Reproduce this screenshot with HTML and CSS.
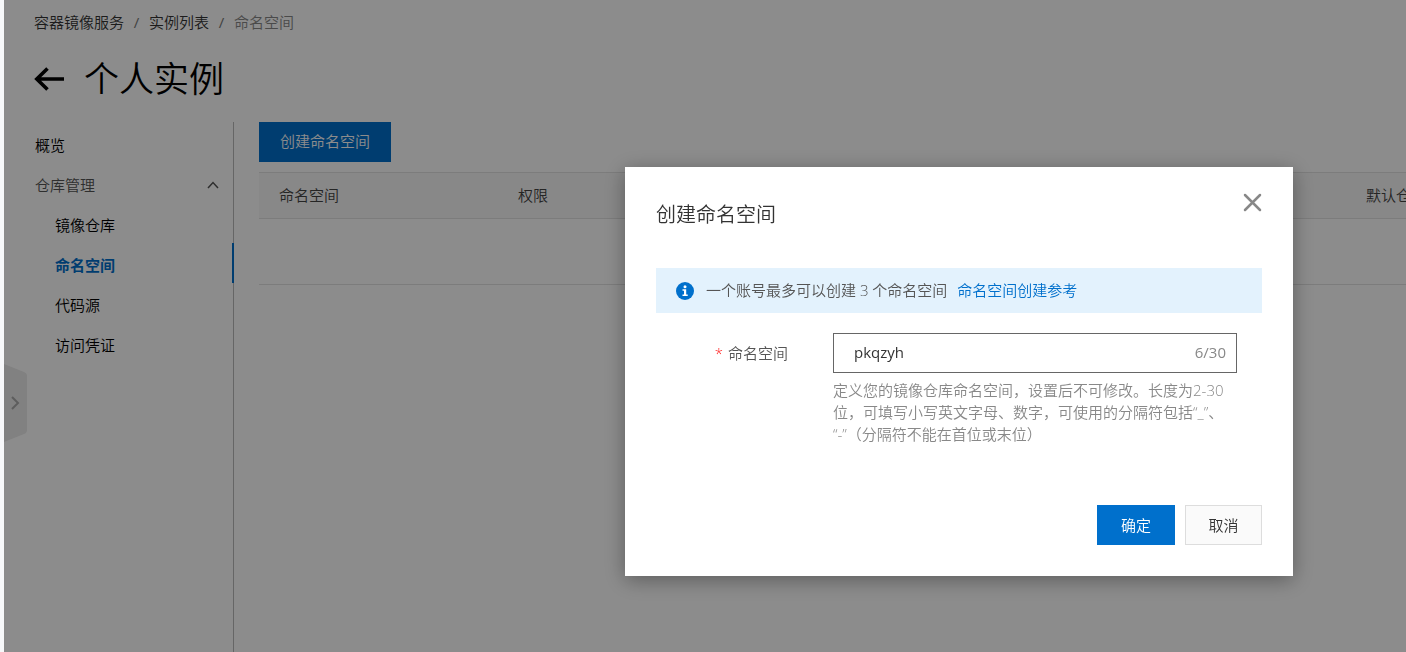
FILE: index.html
```html
<!DOCTYPE html>
<html lang="zh-CN">
<head>
<meta charset="utf-8">
<title>命名空间</title>
<link rel="stylesheet" href="styles.css">
</head>
<body>
<div class="app">
  <nav class="breadcrumb">
    <a href="#">容器镜像服务</a><span class="sep">/</span><a href="#">实例列表</a><span class="sep">/</span><span class="current">命名空间</span>
  </nav>
  <header class="page-head">
    <button class="back" aria-label="返回">
      <svg width="32" height="26" viewBox="0 0 32 26" fill="none" stroke="currentColor" stroke-width="3.600"><path d="M30 13H3M13.500 2.500L2.800 13L13.500 23.500"/></svg>
    </button>
    <h1>个人实例</h1>
  </header>
  <div class="body">
    <nav class="side">
      <a class="item top" href="#">概览</a>
      <button class="item group">仓库管理
        <svg width="12" height="8" viewBox="0 0 12 8" fill="none" stroke="currentColor" stroke-width="1.500"><path d="M1 7L6 1.500L11 7"/></svg>
      </button>
      <a class="item sub" href="#">镜像仓库</a>
      <a class="item sub active" href="#">命名空间</a>
      <a class="item sub" href="#">代码源</a>
      <a class="item sub" href="#">访问凭证</a>
    </nav>
    <main class="content">
      <button class="btn primary create">创建命名空间</button>
      <table class="grid">
        <thead><tr><th class="name">命名空间</th><th>权限</th><th class="type">默认仓库类型</th></tr></thead>
        <tbody><tr><td colspan="3"></td></tr></tbody>
      </table>
    </main>
  </div>
  <button class="drawer" aria-label="展开">
    <svg width="23" height="78" viewBox="0 0 23 78" fill="none"><path d="M0 0L20 8Q23 9 23 12V66Q23 69 20 70L0 78Z" fill="#ebebeb"/><path d="M8 33L14 39L8 45" stroke="#aaa" stroke-width="2"/></svg>
  </button>
</div>
<div class="overlay">
  <form class="dialog" role="dialog" aria-labelledby="dialog-title">
    <div class="dialog-head">
      <h2 id="dialog-title">创建命名空间</h2>
      <button type="button" class="close" aria-label="关闭">
        <svg width="19" height="19" viewBox="0 0 19 19" fill="none" stroke="currentColor" stroke-width="2.500" stroke-linecap="round"><path d="M2 2L17 17M17 2L2 17"/></svg>
      </button>
    </div>
    <div class="notice">
      <svg width="18" height="18" viewBox="0 0 18 18"><circle cx="9" cy="9" r="9" fill="#0070cc"/><circle cx="9" cy="4.700" r="1.500" fill="#fff"/><path d="M6.500 7.300H10.200V12.600H11.700V14H6.500V12.600H8V8.700H6.500Z" fill="#fff"/></svg>
      <span>一个账号最多可以创建 3 个命名空间</span>
      <a href="#">命名空间创建参考</a>
    </div>
    <div class="field">
      <label for="ns"><span class="req">*</span>命名空间</label>
      <div class="control">
        <div class="box"><input id="ns" type="text" value="pkqzyh" maxlength="30"><span class="count">6/30</span></div>
        <p class="help">定义您的镜像仓库命名空间，设置后不可修改。长度为2-30位，可填写小写英文字母、数字，可使用的分隔符包括“_”、<br>“-”（分隔符不能在首位或末位）</p>
      </div>
    </div>
    <div class="actions">
      <button type="button" class="btn primary">确定</button>
      <button type="button" class="btn plain">取消</button>
    </div>
  </form>
</div>
</body>
</html>
```
FILE: styles.css
```css
* { box-sizing: border-box; }
body {
  margin: 0;
  font: 15px/20px "Open Sans", "Noto Sans CJK SC", sans-serif;
  font-weight: 350;
  color: #333;
  background: #f7f8fa;
}
a { color: inherit; text-decoration: none; }
button { font: inherit; color: inherit; border: 0; padding: 0; background: none; cursor: pointer; }
h1, h2, p { margin: 0; font-weight: 350; }
svg { display: block; flex: none; }

.app {
  position: relative;
  display: flex;
  flex-direction: column;
  min-height: 100vh;
  margin-left: 4px;
  padding-left: 30px;
  background: #fff;
  overflow: hidden;
}
.breadcrumb { display: flex; padding-top: 12px; }
.sep { width: 25px; text-align: center; font-weight: 400; color: #777; }
.current { color: #888; }
.page-head { display: flex; align-items: center; gap: 18px; height: 40px; margin: 27px 0 23px; color: #000; }
h1 { font-size: 35px; line-height: 40px; }

.body { display: flex; flex: 1; }
.side { display: flex; flex-direction: column; width: 200px; padding-top: 1px; border-right: 1px solid #bbb; color: #000; }
.item { display: flex; align-items: center; justify-content: space-between; height: 40px; padding: 4px 14px 0 1px; }
.group { color: #555; }
.sub { padding-left: 21px; }
.active { margin-right: -1px; border-right: 2px solid #0070cc; color: #0070cc; font-weight: 700; }

.content { flex: 1; min-width: 0; padding-left: 25px; }
.btn { height: 40px; padding: 0 20px; }
.primary { background: #0070cc; color: #fff; }
.create { width: 132px; display: block; margin-bottom: 10px; padding-bottom: 2px; }
.grid { width: 100%; table-layout: fixed; border-collapse: collapse; }
.grid th { height: 46px; padding: 0 0 2px 20px; border: solid #e2e2e2; border-width: 1px 0; background: #f8f8f8; text-align: left; font-weight: 350; color: #444; white-space: nowrap; }
.grid .name { width: 239px; }
.grid .type { width: 60px; }
.grid td { height: 66px; border-bottom: 1px solid #e2e2e2; }
.drawer { position: absolute; left: 0; top: 364px; }

.overlay {
  position: fixed;
  inset: 0 0 0 4px;
  display: flex;
  align-items: flex-start;
  justify-content: flex-end;
  padding: 167px 113px 0 20px;
  background: rgba(0, 0, 0, .45);
}
.dialog { width: 668px; padding: 26px 31px 31px; background: #fff; box-shadow: 0 4px 20px rgba(0, 0, 0, .35); }
.dialog-head { display: flex; justify-content: space-between; align-items: flex-start; height: 75px; }
h2 { padding-top: 8px; font-size: 20px; line-height: 28px; }
.close { color: #888; }
.notice { display: flex; align-items: center; height: 45px; padding: 0 20px; background: #e3f2fd; color: #555; }
.notice span { margin: 0 10px 0 12px; }
.notice a { color: #0070cc; }
.notice span, .notice a { padding-bottom: 2px; }
.field { display: flex; margin-top: 20px; padding-right: 25px; }
.field label { display: flex; justify-content: flex-end; width: 132px; height: 40px; margin-right: 45px; align-items: center; color: #555; }
.req { margin-right: 5px; color: #f22; }
.control { flex: 1; }
.box { display: flex; align-items: center; height: 40px; padding: 0 10px 0 20px; border: 1px solid #666; }
.box input { flex: 1; min-width: 0; padding: 0 0 2px; border: 0; outline: 0; font: inherit; font-weight: 400; color: #333; background: none; }
.count { padding-bottom: 2px; font-weight: 400; color: #888; }
.help { padding-top: 6px; line-height: 22px; color: #888; text-spacing-trim: space-all; }
.actions { display: flex; justify-content: flex-end; gap: 10px; margin-top: 60px; }
.actions .btn { width: 78px; }
.actions .plain { width: 77px; border: 1px solid #ddd; background: #fafafa; }
```
